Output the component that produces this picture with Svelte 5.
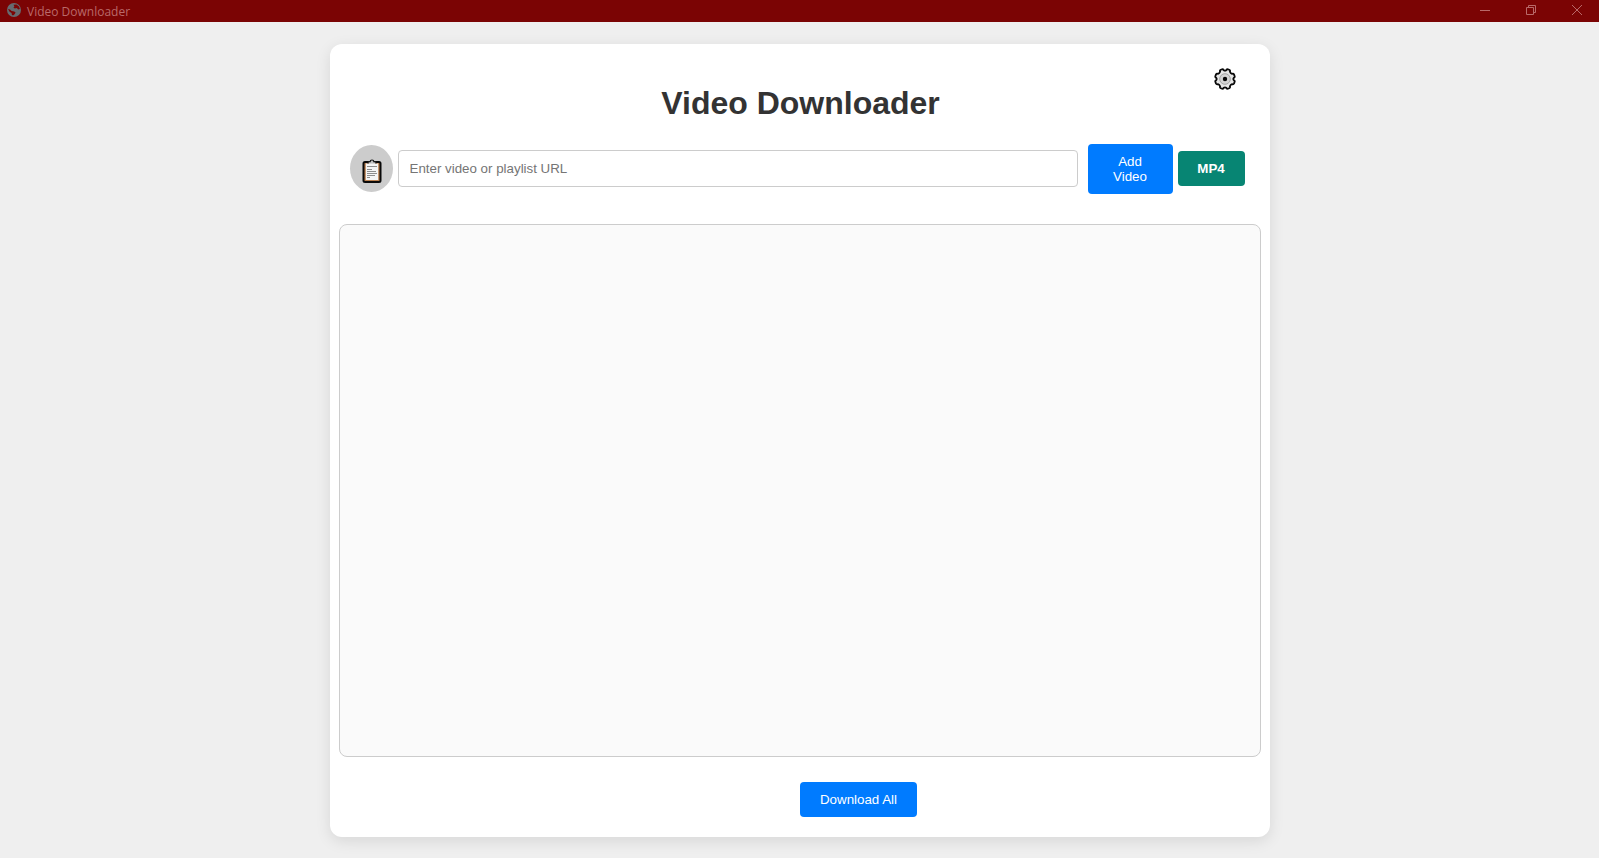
<script>
  let url = $state('');
  let format = $state('MP4');
</script>

<div class="window">
  <div class="titlebar">
    <svg class="globe" width="14" height="14" viewBox="0 0 14 14" aria-hidden="true">
      <circle cx="7" cy="7" r="7" fill="#666b70" />
      <path d="M6.500 1.800 9.500 1.600 12 3.600 12.900 6 11.200 6.400 9.800 5 7.800 5.600 6.400 4.600 7.400 3.400Z" fill="#7b0404" />
      <path d="M1 6 3 6.400 4.600 8 7.200 8.400 8.600 9.600 7.600 11.200 6 12.600 4.800 11.800 4.600 10 2.600 8.800Z" fill="#7b0404" />
    </svg>
    <span class="caption">Video Downloader</span>
    <button class="control" aria-label="Minimize">
      <svg width="10" height="10" viewBox="0 0 10 10"><path d="M0 5.500H10" /></svg>
    </button>
    <button class="control" aria-label="Restore">
      <svg width="10" height="10" viewBox="0 0 10 10"><path d="M.5 2.500H7.500V9.500H.5ZM2.500 2.500V.5H9.500V7.500H7.500" /></svg>
    </button>
    <button class="control" aria-label="Close">
      <svg width="10" height="10" viewBox="0 0 10 10"><path d="M0 0 10 10M10 0 0 10" /></svg>
    </button>
  </div>

  <main class="card">
    <header>
      <h1>Video Downloader</h1>
      <button class="gear" aria-label="Settings">
        <svg width="22" height="22" viewBox="0 0 22 22">
          <path d="M8 1.300Q9.500 1 9.800 2.200Q11 3 12.200 2.200Q12.500 1 14 1.300L15.600 2Q16.400 2.600 15.900 3.700Q16.500 5.300 18.100 5.800Q19.500 5.300 20.100 6.600L20.700 8.400Q20.900 9.500 19.700 9.900Q19 11 19.700 12.100Q20.900 12.500 20.700 13.600L20.100 15.400Q19.500 16.700 18.100 16.200Q16.500 16.700 15.900 18.300Q16.400 19.400 15.600 20L14 20.700Q12.500 21 12.200 19.800Q11 19 9.800 19.800Q9.500 21 8 20.700L6.400 20Q5.600 19.400 6.100 18.300Q5.500 16.700 3.900 16.200Q2.500 16.700 1.900 15.400L1.300 13.600Q1.100 12.500 2.300 12.100Q3 11 2.300 9.900Q1.100 9.500 1.300 8.400L1.900 6.600Q2.500 5.300 3.900 5.800Q5.500 5.300 6.100 3.700Q5.600 2.600 6.400 2Z" fill="#e6e6e6" stroke="#080808" stroke-width="1.800" />
          <circle cx="11" cy="11" r="5.300" fill="#d3d3d3" stroke="#a2a2a2" />
          <circle cx="11" cy="11" r="2.200" fill="#050505" />
        </svg>
      </button>
    </header>

    <div class="entry">
      <button class="paste" aria-label="Paste link">
        <svg width="20" height="24" viewBox="0 0 20 24">
          <rect x="1.500" y="3" width="17" height="20" rx="1.500" fill="#b98050" stroke="#090909" stroke-width="2" />
          <rect x="3.800" y="4.500" width="12.400" height="16.500" fill="#f5f5f5" />
          <path d="M6 4.500V2.800H8Q8.300 1 10 1T12 2.800H14V4.500" fill="#bcbcbc" stroke="#111" stroke-width="1.200" />
          <path d="M7 3.700H13V5H7Z" fill="#d6d6d6" />
          <path d="M5 7.500H15M5 10.500H10M5 12.500H14M5 14.500H15M5 16.500H13M5 18.500H8" stroke="#8d8d8d" />
        </svg>
      </button>
      <input type="text" bind:value={url} placeholder="Enter video or playlist URL" aria-label="Video or playlist URL" />
      <button class="action add">Add Video</button>
      <button class="action format" onclick={() => (format = format === 'MP4' ? 'MP3' : 'MP4')}>{format}</button>
    </div>

    <section class="queue" aria-label="Videos"></section>

    <footer>
      <button class="action">Download All</button>
    </footer>
  </main>
</div>

<style>
  :global(body) {
    margin: 0;
    background: #efefef;
    font-family: 'Liberation Sans', Arial, sans-serif;
  }
  .window {
    display: flex;
    flex-direction: column;
    min-height: 100vh;
  }
  button {
    border: none;
    font-family: inherit;
    cursor: pointer;
  }
  svg {
    display: block;
  }
  .titlebar {
    display: flex;
    align-items: center;
    height: 22px;
    padding-left: 7px;
    background: #7b0404;
    color: #b96969;
  }
  .globe {
    margin-bottom: 2px;
  }
  .caption {
    flex: 1;
    margin-left: 6px;
    padding-top: 2px;
    font: 12px/20px 'Open Sans', 'Noto Sans', sans-serif;
  }
  .control {
    display: grid;
    place-items: center;
    width: 46px;
    height: 20px;
    margin-bottom: 2px;
    padding: 0 0 0 2px;
    background: none;
    color: inherit;
  }
  .control path {
    fill: none;
    stroke: currentColor;
  }
  .card {
    display: flex;
    flex: 1;
    flex-direction: column;
    box-sizing: border-box;
    width: calc(100% - 40px);
    max-width: 940px;
    margin: 22px auto 21px;
    padding: 20px 9px;
    border-radius: 12px;
    background: #fff;
    box-shadow: 0 4px 15px rgba(0, 0, 0, 0.1);
  }
  header {
    display: grid;
    grid-template-columns: 1fr auto 1fr;
    padding: 0 25px 0 27px;
  }
  h1 {
    grid-column: 2;
    margin: 20px 0;
    color: #333;
    font-size: 32px;
    line-height: 38px;
  }
  .gear {
    justify-self: end;
    align-self: start;
    margin-top: 4px;
    padding: 0;
    background: none;
  }
  .entry {
    display: flex;
    align-items: center;
    gap: 5px;
    padding: 2px 16px 30px 11px;
  }
  .paste,
  input,
  .format {
    margin-bottom: 1px;
  }
  .paste {
    display: grid;
    flex: none;
    place-items: center;
    width: 43px;
    height: 47px;
    padding: 4px 0 0 2px;
    border-radius: 50%;
    background: #ccc;
  }
  input {
    flex: 1;
    box-sizing: border-box;
    min-width: 0;
    height: 37px;
    margin-right: 5px;
    padding: 10px 11px;
    border: 1px solid #ccc;
    border-radius: 4px;
    font-family: inherit;
  }
  input::placeholder {
    color: #757575;
  }
  .action {
    padding: 10px 20px;
    border-radius: 4px;
    background: #007bff;
    color: #fff;
    line-height: 15px;
  }
  .add {
    width: 85px;
  }
  .format {
    width: 67px;
    padding: 10px 0;
    background: #078573;
    font-weight: bold;
  }
  .queue {
    flex: 1;
    min-height: 120px;
    border: 1px solid #ccc;
    border-radius: 8px;
    background: #fafafa;
  }
  footer {
    display: flex;
    justify-content: center;
    padding: 25px 0 0 118px;
  }
</style>
